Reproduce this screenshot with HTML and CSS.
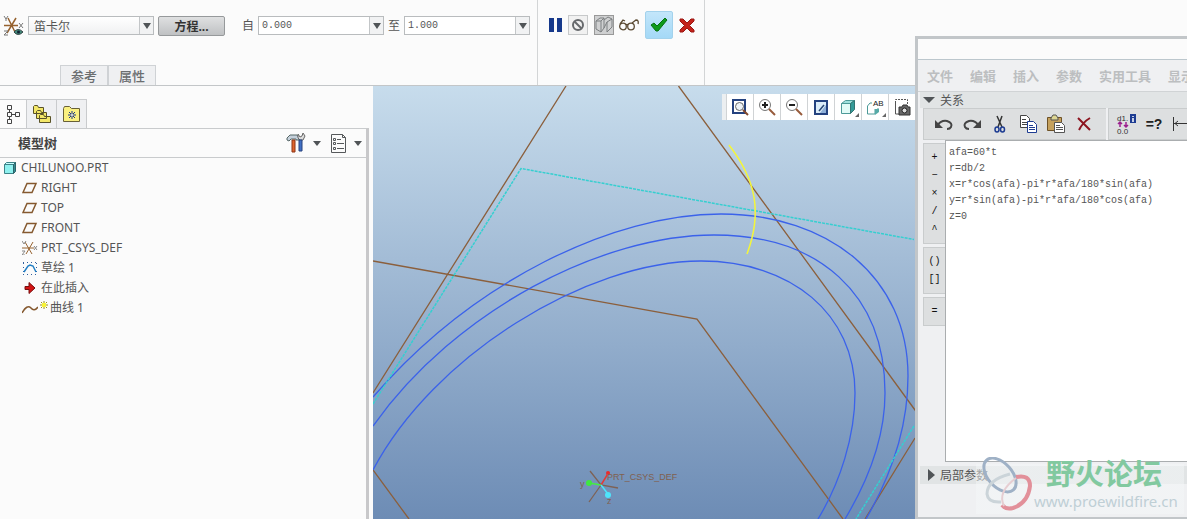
FILE: index.html
```html
<!DOCTYPE html>
<html lang="zh-CN">
  <head>
    <meta charset="utf-8">
    <title>CHILUNOO.PRT</title>
    <link rel="stylesheet" href="styles.css">
  </head>
  <body>
    <header class="ribbon">
      <section class="settings">
        <div class="fields">
          <svg class="csys" width="21" height="21" viewBox="0 0 21 21" fill="none">
            <path d="M1 10.500h14M5 3l7 14M13 3L4 18" stroke="#96622f" stroke-width="1.500"/>
            <path d="M1 1l2 3 2-3M3 4v2M16 8l4 5M20 8l-4 5M1 16h4l-4 4h4" stroke="#777"/>
            <path d="M11 17q4-5 9 0-5 5-9 0z" fill="#438b7b" stroke="#344"/>
            <circle cx="15.500" cy="17" r="1.500" fill="#123"/>
          </svg>
          <div class="combo combo-select">
            <select aria-label="坐标类型"><option>笛卡尔</option><option>柱坐标</option><option>球坐标</option></select>
            <span class="drop"><i class="arrow"></i></span>
          </div>
          <button class="equation">方程...</button>
          <label for="from">自</label>
          <div class="combo">
            <input id="from" type="text" value="0.000">
            <button class="drop" aria-label="自"><i class="arrow"></i></button>
          </div>
          <label for="to">至</label>
          <div class="combo">
            <input id="to" type="text" value="1.000">
            <button class="drop" aria-label="至"><i class="arrow"></i></button>
          </div>
        </div>
        <nav class="tabs">
          <button>参考</button>
          <button>属性</button>
        </nav>
      </section>
      <section class="actions">
        <button class="plain" aria-label="暂停">
          <svg width="13" height="14" viewBox="0 0 13 14"><path d="M0 0h5v14H0zM8 0h5v14H8z" fill="#16398b"/></svg>
        </button>
        <button class="boxed" aria-label="无预览">
          <svg width="14" height="14" viewBox="0 0 14 14" fill="none" stroke="#66696c" stroke-width="2"><circle cx="7" cy="7" r="5"/><path d="M3.500 3.500l7 7"/></svg>
        </button>
        <button class="boxed pressed" aria-label="几何预览">
          <svg width="18" height="18" viewBox="0 0 18 18" fill="none" stroke="#7d8082"><path d="M1 5l4-3h4v10l-3 4-5-3zM1 5h5v11M6 5l3-3M9 4l4-3 4 2v8l-5 5V6l5-3M9 12l3-6"/></svg>
        </button>
        <button class="plain" aria-label="预览">
          <svg width="20" height="12" viewBox="0 0 20 12" fill="none" stroke="#5b4a33" stroke-width="1.300"><circle cx="4" cy="7.500" r="3.300"/><circle cx="12" cy="7.500" r="3.300"/><path d="M1 5l3-4 2 1M7 6q1-1 2 0M13 4l4-3q3 0 2 4"/></svg>
        </button>
        <button class="accept" aria-label="确定">
          <svg width="18" height="14" viewBox="0 0 18 14"><path d="M1 7l3-2 3 3 8-8 2 2L8 13H6z" fill="#0e9a1b" stroke="#067010"/></svg>
        </button>
        <button class="plain" aria-label="取消">
          <svg width="16" height="15" viewBox="0 0 16 15"><path d="M1 1h3l4 4 4-4h3v2l-4.500 4.500L15 12v2h-3l-4-4-4 4H1v-2l4.500-4.500L1 3z" fill="#c4231b" stroke="#9a1712"/></svg>
        </button>
      </section>
    </header>

    <main class="workspace">
      <aside class="sidebar">
        <nav class="side-tabs">
          <button class="current" aria-label="模型树">
            <svg width="14" height="20" viewBox="0 0 14 20" fill="none" stroke="#444"><path d="M1.500 1.500h4v4h-4zM1.500 8.500h4v4h-4zM9.500 8.500h4v4h-4zM1.500 15.500h4v4h-4zM3.500 6v2M3.500 13v2M6 10.500h3"/></svg>
          </button>
          <button aria-label="文件夹浏览器">
            <svg width="20" height="20" viewBox="0 0 20 20" fill="#f3e768" stroke="#595228"><path d="M1.500 9.500v-7l1-1h3l1 2h5v6zM4.500 14.500v-7l1-1h3l1 2h5v6zM7.500 18.500v-7l1-1h3l1 2h6v6z"/></svg>
          </button>
          <button aria-label="收藏夹">
            <svg width="18" height="16" viewBox="0 0 18 16"><path d="M.5 15.500V2.500l1-2h5l2 2h8v13z" fill="#faf080" stroke="#686038"/><path d="M9 5v8M5 9h8M6 6l6 6M12 6l-6 6" stroke="#1b3586"/><circle cx="9" cy="9" r="1" fill="#fff"/></svg>
          </button>
        </nav>
        <section class="tree-panel">
          <div class="tree-head">
            <h2>模型树</h2>
            <button class="menu-btn" aria-label="设置">
              <svg width="20" height="20" viewBox="0 0 20 20"><path d="M1 5l3-3h7l2 3v2h-3V6H5L3 8 1 7z" fill="#c5d0db" stroke="#566"/><path d="M6 7h3v12H6z" fill="#e0642c" stroke="#8d3516"/><path d="M12 1l2 3 2-1 1-3 2 3-2 4h-3l-2-2z" fill="#ddd" stroke="#666"/><path d="M13 7h3v11h-3z" fill="#4270c4" stroke="#26427e"/></svg>
              <i class="arrow small"></i>
            </button>
            <button class="menu-btn" aria-label="显示">
              <svg width="17" height="19" viewBox="0 0 17 19" fill="none" stroke="#55585a"><path d="M1.500.5h11l3 3v15h-14zM12.500.5v3h3M7 5.500h4M7 9.500h7M7 14.500h7"/><path d="M3.500 4.500h2v2h-2zM3.500 8.500h2v2h-2zM3.500 13.500h2v2h-2z"/></svg>
              <i class="arrow small"></i>
            </button>
          </div>
          <ul class="tree">
            <li class="root">
              <svg width="15" height="14" viewBox="0 0 15 14"><path d="M1.500 3.500h9v9h-9z" fill="#8ff1ef" stroke="#3d8388"/><path d="M1.500 3.500l2-2h9l-2 2z" fill="#c8ffff" stroke="#3d8388"/><path d="M10.500 3.500l2-2v9l-2 2z" fill="#358b91" stroke="#2d6469"/></svg>CHILUNOO.PRT
            </li>
            <li><svg class="ic" viewBox="0 0 16 14"><use href="#plane"/></svg>RIGHT</li>
            <li><svg class="ic" viewBox="0 0 16 14"><use href="#plane"/></svg>TOP</li>
            <li><svg class="ic" viewBox="0 0 16 14"><use href="#plane"/></svg>FRONT</li>
            <li>
              <svg class="ic" viewBox="0 0 16 14" fill="none"><path d="M0 7h12M3 1l7 12M11 1L4 13" stroke="#96622f"/><path d="M0 0l2 3 2-3M12 5l3 4M15 5l-3 4M0 10h3l-3 4h3" stroke="#888"/></svg>PRT_CSYS_DEF
            </li>
            <li>
              <svg class="ic" viewBox="0 0 16 14" fill="none"><path d="M1 1.500h14M1 13.500h14M1.500 2v12M14.500 2v12" stroke="#335f9c" stroke-dasharray="1 3"/><path d="M2 11l4-6 2-1 3 1 3 6" stroke="#217ec4" stroke-width="1.500"/></svg>草绘 1
            </li>
            <li>
              <svg class="ic" viewBox="0 0 16 14"><path d="M3 5.500h4v-4l6 5.500-6 5.500v-4H3z" fill="#d31414" stroke="#770e0e"/></svg>在此插入
            </li>
            <li class="curve">
              <svg class="ic" viewBox="0 0 16 14" fill="none"><path d="M0 12q5-9 9-5 3 4 7-1" stroke="#85592f" stroke-width="1.500"/></svg>
              <svg width="8" height="14" viewBox="0 0 8 14"><path d="M4 0v8M0 4h8M1 1l6 6M7 1L1 7" stroke="#9b9414"/><path d="M2 2h4v4H2z" fill="#f8f437"/></svg>曲线 1
            </li>
          </ul>
        </section>
      </aside>

      <section class="viewport">
        <svg class="scene" fill="none">
          <g stroke="#8b5f3c" stroke-width="1.300">
            <path d="M193 0L0 307M305.500 0L542 324l30 41M0 175l324 58 146 200M0 384l36 49M542 352l-50 81"/>
          </g>
          <g stroke="#3b62ea" stroke-width="1.300">
            <path d="M0 311C100 195 240 128 348 128S535 192 535 290C535 345 515 395 493 433"/>
            <path d="M0 340C83 223 230 149 341 149C446 149 512 208 512 307C512 355 493 398 472 433"/>
            <path d="M0 384C60 270 213 175 328 175C418 175 482 228 482 307C482 350 467 397 445 433"/>
          </g>
          <path d="M0 318L148 82.500 541 153.500M541 340l-58 93" stroke="#35cfd0" stroke-width="1.500" stroke-dasharray="3 1"/>
          <path d="M356 59C384 95 389 128 374 168" stroke="#f4f63a" stroke-width="1.500"/>
          <path d="M217 385l11 14 17 3M228 399l-12 17" stroke="#7e6255" stroke-width="1.300"/>
          <path d="M228 399l8-13" stroke="#e23a36" stroke-width="1.500"/>
          <path d="M228 399l-12-2" stroke="#44ee44" stroke-width="1.500"/>
          <path d="M228 399l7 9" stroke="#4ee4fa" stroke-width="1.500"/>
          <circle cx="235" cy="387" r="2" fill="#e82c2c"/>
          <circle cx="216" cy="397" r="3" fill="#3fe83f"/>
          <circle cx="235" cy="409" r="3" fill="#4ee4fa"/>
          <text x="207" y="401">y</text>
          <text x="234" y="418">z</text>
          <text x="234" y="394">PRT_CSYS_DEF</text>
        </svg>
        <div class="view-tools">
          <button aria-label="重新调整">
            <svg viewBox="0 0 18 18" fill="none"><path d="M2 2h12v13H2z" stroke="#24427f" stroke-width="2"/><circle cx="8.500" cy="8.500" r="4" fill="#edf3f8" stroke="#666"/><path d="M12 12l5 5" stroke="#82492e" stroke-width="2"/></svg>
          </button>
          <button aria-label="放大">
            <svg viewBox="0 0 18 18" fill="none"><circle cx="7" cy="7" r="5.500" stroke="#777"/><path d="M4 7h6M7 4v6" stroke="#222" stroke-width="2"/><path d="M11 11l6 6" stroke="#985b3b" stroke-width="2"/></svg>
          </button>
          <button aria-label="缩小">
            <svg viewBox="0 0 18 18" fill="none"><circle cx="7" cy="7" r="5.500" stroke="#777"/><path d="M4 7h6" stroke="#222" stroke-width="2"/><path d="M11 11l6 6" stroke="#985b3b" stroke-width="2"/></svg>
          </button>
          <button aria-label="重画">
            <svg viewBox="0 0 18 18" fill="none"><path d="M3 3h12v13H3z" fill="#dcedf9" stroke="#24427f" stroke-width="2"/><path d="M8 15l6-8v8z" fill="#8fb0d8"/><path d="M7 13l5-6" stroke="#284775" stroke-width="1.500"/></svg>
          </button>
          <button class="more" aria-label="显示样式">
            <svg viewBox="0 0 18 18"><path d="M2.500 5.500h9v10h-9z" fill="#e1fbf7" stroke="#4c9a98"/><path d="M2.500 5.500l4-3h9l-4 3z" fill="#9ee1dd" stroke="#4c9a98"/><path d="M11.500 5.500l4-3v9l-4 4z" fill="#349b98" stroke="#327472"/></svg>
          </button>
          <button class="more" aria-label="已命名视图">
            <svg viewBox="0 0 18 18"><path d="M6 5H4L1.500 8v8H9v-5M9 16l3-3v-3" fill="none" stroke="#4c9a98"/><path d="M9 11h4v3l-4 3z" fill="#55aaa7"/><text x="7" y="8">AB</text></svg>
          </button>
          <button aria-label="视图管理器">
            <svg viewBox="0 0 18 18" fill="none"><path d="M2.500 14V1.500h12V7" stroke="#555" stroke-dasharray="2 1"/><path d="M2.500 4v12H6" stroke="#555"/><path d="M6 9h3l1-2h4l1 2h2v8H6z" fill="#666" stroke="#333"/><circle cx="11.500" cy="12.500" r="2.500" fill="#ddd" stroke="#222"/></svg>
          </button>
        </div>
      </section>
    </main>

    <section class="relations">
      <div class="titlebar"></div>
      <nav class="menubar">
        <button>文件</button>
        <button>编辑</button>
        <button>插入</button>
        <button>参数</button>
        <button>实用工具</button>
        <button>显示</button>
      </nav>
      <h3 class="fold"><i class="arrow open"></i>关系</h3>
      <div class="toolbar">
        <div class="group">
          <button aria-label="撤消">
            <svg viewBox="0 0 20 20" fill="none"><path d="M4 11q3-5 9-4 6 2 4 6-1 2-4 2" stroke="#444" stroke-width="2"/><path d="M1 6v8h8z" fill="#444"/></svg>
          </button>
          <button aria-label="重做">
            <svg viewBox="0 0 20 20" fill="none"><path d="M16 11q-3-5-9-4-6 2-4 6 1 2 4 2" stroke="#444" stroke-width="2"/><path d="M19 6v8h-8z" fill="#444"/></svg>
          </button>
          <button aria-label="剪切">
            <svg viewBox="0 0 20 20" fill="none"><path d="M7 2l5 11M12 2L8 13" stroke="#333" stroke-width="1.500"/><ellipse cx="7" cy="15.500" rx="2" ry="2.500" stroke="#1d3c92" stroke-width="1.500"/><ellipse cx="12.500" cy="15.500" rx="2" ry="2.500" stroke="#1d3c92" stroke-width="1.500"/></svg>
          </button>
          <button aria-label="复制">
            <svg viewBox="0 0 20 20" fill="#fff"><path d="M2.500 1.500h6l3 3v9h-9z" stroke="#444"/><path d="M4 5.500h4M4 8.500h5M4 10.500h5" stroke="#444"/><path d="M9.500 7.500h6l3 3v8h-9z" stroke="#1d3c92"/><path d="M11 11.500h4M11 13.500h6M11 15.500h6" stroke="#1d3c92"/></svg>
          </button>
          <button aria-label="粘贴">
            <svg viewBox="0 0 20 20"><path d="M1.500 3.500h14v13h-14z" fill="#c5a15d" stroke="#6e5227"/><path d="M5 4l2-3h3l2 3v2H5z" fill="#ddd693" stroke="#555"/><path d="M8.500 8.500h7l3 3v7h-10z" fill="#fff" stroke="#555"/><path d="M10 11.500h4M10 13.500h7M10 15.500h7" stroke="#555"/></svg>
          </button>
          <button aria-label="删除">
            <svg viewBox="0 0 20 20" fill="none"><path d="M4 4l12 12M16 4q-7 4-11 12" stroke="#8d1520" stroke-width="2"/></svg>
          </button>
        </div>
        <div class="group">
          <button aria-label="切换尺寸">
            <svg viewBox="0 0 20 20"><text x="1" y="7">d1.</text><path d="M14 0h6v9h-6z" fill="#1d3c92"/><path d="M17 2v1M17 4v4" stroke="#fff" stroke-width="1.500"/><path d="M4 13V8M2 10l2-2 2 2M10 8v5M8 11l2 2 2-2" fill="none" stroke="#9c208f" stroke-width="1.500"/><text x="1" y="20">0.0</text></svg>
          </button>
          <button class="eval">=?</button>
          <button aria-label="尺寸">
            <svg viewBox="0 0 20 20" fill="none" stroke="#333"><path d="M1.500 3v14M2 9.500h18M6 7L3 9.500 6 12"/></svg>
          </button>
        </div>
      </div>
      <div class="editor">
        <div class="operators">
          <div class="ops">
            <button>+</button>
            <button>−</button>
            <button>×</button>
            <button>/</button>
            <button>^</button>
          </div>
          <div class="ops">
            <button>()</button>
            <button>[]</button>
          </div>
          <div class="ops">
            <button>=</button>
          </div>
        </div>
        <textarea aria-label="关系" spellcheck="false" wrap="off">afa=60*t
r=db/2
x=r*cos(afa)-pi*r*afa/180*sin(afa)
y=r*sin(afa)-pi*r*afa/180*cos(afa)
z=0</textarea>
      </div>
      <h3 class="fold local"><i class="arrow closed"></i>局部参数</h3>
      <div class="watermark">
        <svg width="58" height="56" viewBox="0 0 58 56" fill="none">
          <ellipse cx="24" cy="18" rx="12" ry="20" transform="rotate(-42 24 18)" stroke="#9fb1c6" stroke-width="3"/>
          <path d="M34 17Q11 23 11 37q1 9 14 8" stroke="#cbd4d9" stroke-width="3"/>
          <path d="M40 20q14-3 14 9-2 17-17 22-7 2-11-3" stroke="#e2909a" stroke-width="4"/>
          <path d="M40 21Q21 35 28 49" stroke="#e6cdd1" stroke-width="2"/>
        </svg>
        <div>
          <strong>野火论坛</strong>
          <span>www.proewildfire.cn</span>
        </div>
      </div>
    </section>

    <svg class="defs" width="0" height="0">
      <symbol id="plane" viewBox="0 0 16 14"><path d="M5 2.500h9l-4 9H1z" fill="none" stroke="#85592f" stroke-width="1.500"/></symbol>
    </svg>
  </body>
</html>
```
FILE: styles.css
```css
* {
  box-sizing: border-box;
}
body {
  position: relative;
  display: flex;
  flex-direction: column;
  height: 100vh;
  margin: 0;
  overflow: hidden;
  background: #fbfbfb;
  color: #555;
  font: 13px "Noto Sans", "Noto Sans CJK SC", sans-serif;
}
button {
  display: flex;
  align-items: center;
  justify-content: center;
  margin: 0;
  padding: 0;
  border: 0;
  background: none;
  color: inherit;
  font: inherit;
}
svg {
  flex: none;
}
.defs {
  position: absolute;
}
.arrow {
  border: 4px solid transparent;
  border-top: 6px solid #505457;
  border-bottom: 0;
}
.arrow.small {
  border-top-width: 5px;
}

/* ribbon */
.ribbon {
  display: flex;
  flex: none;
  height: 86px;
  border-bottom: 1px solid #c3c6c8;
}
.settings {
  display: flex;
  flex-direction: column;
  justify-content: space-between;
  width: 538px;
  padding-top: 15px;
  border-right: 1px solid #d3d5d6;
}
.fields {
  display: flex;
  align-items: center;
  gap: 4px;
  padding-left: 3px;
  font-size: 12px;
}
.fields label {
  width: 12px;
  line-height: 20px;
}
.combo {
  position: relative;
  display: flex;
  width: 126px;
  height: 19px;
  border: 1px solid #b9bcbe;
  background: #fff;
}
.combo input,
.combo select {
  flex: 1;
  min-width: 0;
  padding: 0 3px;
  border: 0;
  outline: 0;
  background: none;
  color: #555;
  font: 10px "Liberation Mono", monospace;
}
.combo select {
  appearance: none;
  padding: 0 5px;
  font: 12px "Noto Sans CJK SC", sans-serif;
}
.combo-select {
  background: linear-gradient(#fff, #f0f1f2);
}
.drop {
  display: flex;
  align-items: center;
  justify-content: center;
  width: 14px;
  border-left: 1px solid #c3c6c8;
  background: #f1f2f3;
}
.combo-select .drop {
  position: absolute;
  top: 0;
  right: 0;
  bottom: 0;
  pointer-events: none;
}
.equation {
  width: 67px;
  height: 20px;
  margin-right: 13px;
  border: 1px solid #96999b;
  border-radius: 2px;
  background: linear-gradient(#dfe0e1, #bfc1c3);
  color: #333;
  font-weight: bold;
}
.tabs {
  display: flex;
  padding-left: 60px;
}
.tabs button {
  width: 48px;
  height: 20px;
  border: 1px solid #cfd2d5;
  border-bottom: 0;
  background: #eff0f2;
  color: #6b6e70;
  font-weight: 500;
}
.actions {
  display: flex;
  align-items: flex-start;
  justify-content: space-between;
  width: 167px;
  padding: 11px 9px 0 11px;
  border-right: 1px solid #d3d5d6;
}
.plain,
.boxed,
.accept {
  height: 28px;
}
.boxed {
  width: 20px;
  height: 20px;
  margin-top: 4px;
  border: 1px solid #c7c9ca;
  background: #f1f1f1;
}
.pressed {
  border-color: #999;
  background: #cfd0d1;
}
.accept {
  width: 28px;
  border: 1px solid #a3d2ec;
  border-radius: 2px;
  background: linear-gradient(#c3e6fa, #a4d9f7);
}

/* model tree */
.workspace {
  display: flex;
  flex: 1;
  min-height: 0;
}
.sidebar {
  display: flex;
  flex-direction: column;
  width: 373px;
  padding: 13px 4px 0 0;
}
.side-tabs {
  display: flex;
}
.side-tabs button {
  width: 30px;
  height: 29px;
  border: 1px solid #c9cbcd;
  border-left: 0;
  border-bottom: 0;
  background: #eff0f2;
}
.side-tabs .current {
  width: 27px;
  background: none;
}
.tree-panel {
  flex: 1;
  border-top: 1px solid #c9cbcd;
  border-right: 3px solid #c8c8ca;
}
.tree-head {
  display: flex;
  align-items: center;
  gap: 9px;
  height: 29px;
  padding: 0 4px 0 18px;
  border-bottom: 1px solid #c9cbcd;
}
.tree-head h2 {
  margin: 0 auto 0 0;
  color: #444;
  font-size: 13px;
  line-height: 20px;
}
.menu-btn {
  gap: 7px;
}
.tree {
  margin: 0;
  padding: 0;
  font-size: 12px;
  line-height: 18px;
  list-style: none;
}
.tree li {
  display: flex;
  align-items: center;
  gap: 3px;
  height: 20px;
  padding-left: 22px;
}
.tree .root {
  padding-left: 3px;
}
.tree .curve {
  gap: 2px;
}
.ic {
  width: 16px;
  height: 14px;
}

/* graphics area */
.viewport {
  position: relative;
  flex: 1;
  min-width: 0;
  background: linear-gradient(#c7dcec, #6d8cb5);
}
.scene {
  display: block;
  width: 100%;
  height: 100%;
}
.scene text {
  fill: #80604f;
  font: 9px "Liberation Sans", sans-serif;
}
.view-tools {
  position: absolute;
  top: 8px;
  right: 272px;
  display: flex;
  height: 26px;
  padding-left: 4px;
  background: #eceff1;
}
.view-tools button {
  position: relative;
  width: 27px;
  border-left: 1px solid #d0d3d5;
  background: #fff;
}
.view-tools svg {
  width: 18px;
  height: 18px;
}
.view-tools text {
  fill: #222;
  font: 8px "Liberation Sans", sans-serif;
}
.more::after {
  content: "";
  position: absolute;
  right: 2px;
  bottom: 3px;
  border-left: 4px solid transparent;
  border-bottom: 4px solid #666;
}

/* relations window */
.relations {
  position: absolute;
  top: 36px;
  right: 0;
  bottom: 0;
  display: flex;
  flex-direction: column;
  width: 272px;
  border: 3px solid #c2c6c9;
  border-right: 0;
  border-bottom-width: 2px;
  background: #eff0f2;
  overflow: hidden;
}
.titlebar {
  height: 21px;
  border-bottom: 1px solid #bcc7cd;
  background: #fbfbfb;
}
.menubar {
  display: flex;
  gap: 17px;
  height: 32px;
  padding-left: 9px;
  border-bottom: 1px solid #d0d3d5;
  color: #bcbec0;
  font-weight: bold;
}
.menubar button {
  flex: none;
}
.fold {
  display: flex;
  align-items: center;
  gap: 5px;
  height: 16px;
  margin: 0 0 0 2px;
  padding-left: 3px;
  background: #e1e4e5;
  color: #555;
  font-size: 12px;
  font-weight: normal;
}
.open {
  border-width: 6px 6px 0;
}
.closed {
  margin-left: 5px;
  border: 6px solid transparent;
  border-left: 7px solid #505457;
  border-right: 0;
}
.toolbar {
  display: flex;
  gap: 2px;
  height: 32px;
  margin-left: 5px;
}
.group {
  display: flex;
  align-items: center;
  gap: 8px;
  flex: none;
  padding: 0 12px 0 10px;
  border: 1px solid #c9cccd;
  border-right: 0;
  background: #dddfe0;
}
.group + .group {
  padding-left: 7px;
}
.group svg {
  width: 20px;
  height: 20px;
  overflow: visible;
}
.group text {
  fill: #333;
  font: 8px "Liberation Sans", sans-serif;
}
.eval {
  width: 20px;
  color: #222;
  font: bold 14px "Liberation Sans", sans-serif;
}
.editor {
  display: flex;
  flex: 1;
  min-height: 0;
  padding-left: 5px;
}
.operators {
  display: flex;
  flex-direction: column;
  gap: 3px;
  width: 22px;
  padding-top: 3px;
}
.ops {
  padding: 4px 0 5px;
  border: 1px solid #c9cccd;
  border-right: 0;
  background: #dddfe0;
}
.ops button {
  width: 100%;
  height: 18px;
  color: #111;
  font: 10px "Liberation Mono", monospace;
}
.editor textarea {
  flex: 1;
  min-width: 0;
  padding: 4px 3px;
  border: 1px solid #aaadaf;
  border-right: 0;
  outline: 0;
  background: #fff;
  color: #555;
  font: 10px/16px "Liberation Mono", monospace;
  resize: none;
  overflow: hidden;
}
.local {
  height: 18px;
  margin-top: 4px;
  margin-bottom: 33px;
}
.watermark {
  position: absolute;
  right: 3px;
  bottom: 3px;
  display: flex;
  align-items: center;
  width: 208px;
  height: 58px;
  background: linear-gradient(transparent 8px, rgba(244, 247, 248, 0.5) 8px);
  color: #82c9a0;
}
.watermark div {
  display: flex;
  flex-direction: column;
}
.watermark strong {
  padding-left: 12px;
  font-size: 29px;
  font-weight: bold;
  line-height: 32px;
}
.watermark span {
  color: #bfcfd5;
  font-size: 15px;
  line-height: 22px;
}
```
